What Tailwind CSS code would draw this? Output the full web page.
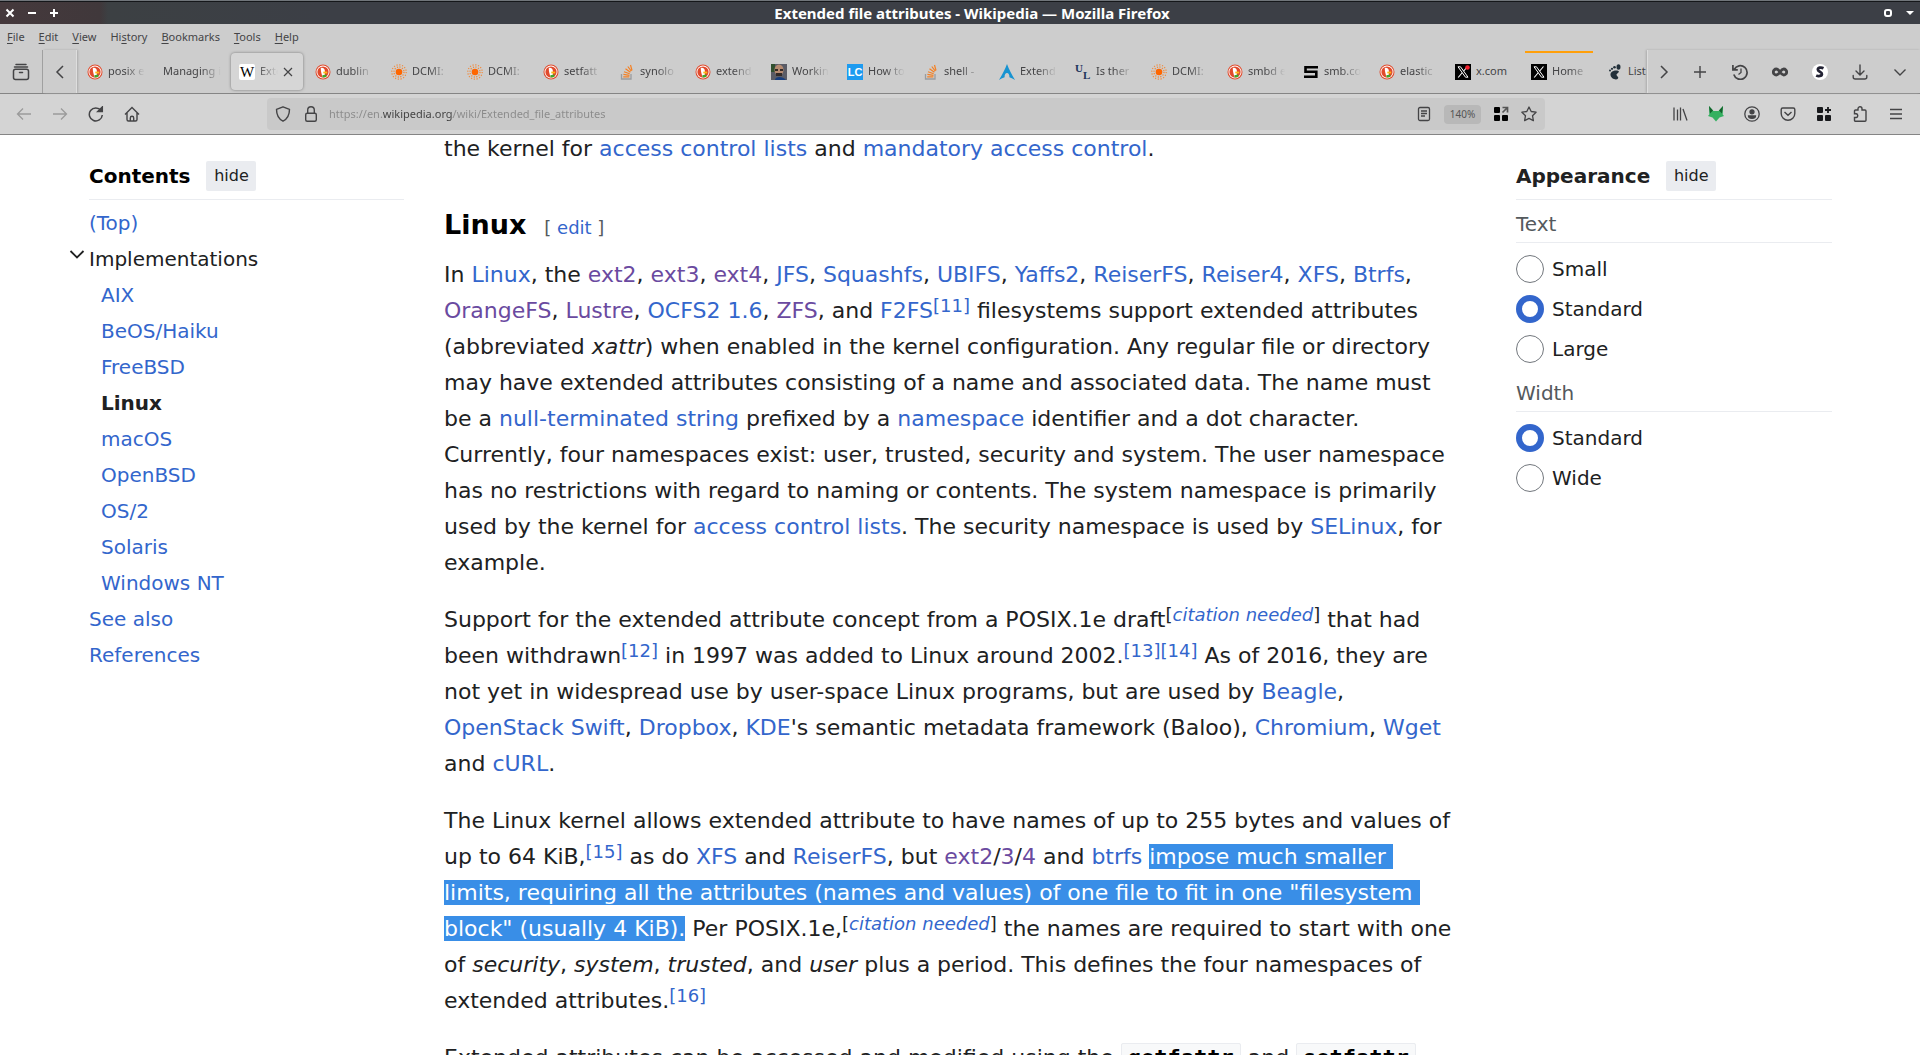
<!DOCTYPE html>
<html lang="en">
<head>
<meta charset="utf-8">
<title>Extended file attributes - Wikipedia — Mozilla Firefox</title>
<script src="https://cdn.jsdelivr.net/npm/@tailwindcss/browser@4"></script>
</head>
<body class="h-screen overflow-hidden flex flex-col bg-white text-[#202122] font-['DejaVu_Sans',sans-serif] [&_main_a]:text-[#3366cc] [&_main_a.v]:text-[#6a4aa0] [&_nav_a]:text-[#3366cc]">

<svg class="hidden" aria-hidden="true">
  <symbol id="ddg" viewBox="0 0 16 16"><circle cx="8" cy="8" r="7.500" fill="#e04a2c"/><circle cx="8" cy="8" r="6.500" fill="#fff"/><circle cx="8" cy="8" r="5.600" fill="#e04a2c"/><path d="M5.800 4C8 3.400 10 4.700 9.900 7.500l-.2 4.800-2.500.4C7 10.500 5.500 7 5.800 4z" fill="#fff"/><path d="M8.300 7.600h3.900v1.800H8.300z" fill="#fdb913"/><path d="M7.300 11.200l4-.6v2.400l-3.700.6z" fill="#3ca82b"/></symbol>
  <symbol id="dcmi" viewBox="0 0 16 16"><circle cx="8" cy="8" r="3.300" fill="#f60"/><circle cx="8" cy="8" r="5" fill="none" stroke="#f08a3c" stroke-width="1.300" stroke-dasharray="1.200 1.400"/><circle cx="8" cy="8" r="7.200" fill="none" stroke="#f08a3c" stroke-width="1.200" stroke-dasharray="1.200 1.630"/></symbol>
  <symbol id="so" viewBox="0 0 16 16"><path d="M2.500 10v5h9.500v-5" fill="none" stroke="#9a9c9f" stroke-width="1.300"/><path d="M4.200 12.800h6.200M4.400 10.400l6.100.9M5 7.700l5.700 2M6.500 4.800l4.900 3.500M8.800 2.500l3.500 4.700M11.500 1l1.500 5.500" stroke="#f48024" stroke-width="1.200" fill="none"/></symbol>
  <symbol id="x" viewBox="0 0 16 16"><path fill="#000" d="M0 0h16v16H0z"/><path d="M12.500 2.500L3.200 13.500" stroke="#fff" stroke-width="1.100"/><path d="M3 2.800h2.500l7.500 10.400h-2.500z" fill="#000" stroke="#fff" stroke-width="1"/></symbol>
</svg>

<header class="shrink-0 font-['Noto_Sans',sans-serif] text-[#444446] text-[11px]">
  <div class="h-6 bg-[linear-gradient(to_right,#45393c_0,#40383b_100px,#3c4043_108px,#3c3f46_320px)] border-t border-[#70757a] flex items-center justify-between text-white shadow-[inset_0_1px_0_#15171a]">
    <div class="flex-1 flex items-center gap-3 pl-[5px]">
      <button aria-label="Close" class="size-[10px]"><svg viewBox="0 0 10 10" stroke="currentColor" stroke-width="2"><path d="M1.500 1.500l7 7m0-7l-7 7"/></svg></button>
      <button aria-label="Minimise" class="size-[10px]"><svg viewBox="0 0 10 10" stroke="currentColor" stroke-width="2"><path d="M1 5h8"/></svg></button>
      <button aria-label="Maximise" class="size-[10px]"><svg viewBox="0 0 10 10" stroke="currentColor" stroke-width="2"><path d="M1 5h8M5 1v8"/></svg></button>
    </div>
    <h1 class="text-[15px] font-bold leading-6 pt-px ml-6">Extended file attributes - Wikipedia — Mozilla Firefox</h1>
    <div class="flex-1 flex items-center justify-end gap-3 pr-[5px]">
      <button aria-label="Shade" class="size-[10px]"><svg viewBox="0 0 10 10" fill="none" stroke="currentColor" stroke-width="2"><rect x="2" y="2" width="6" height="6" rx="2"/></svg></button>
      <button aria-label="Window menu" class="size-[10px]"><svg viewBox="0 0 10 10" fill="currentColor"><path d="M1 3h8L5 7z"/></svg></button>
    </div>
  </div>

  <div class="h-[26px] bg-[#cdcdcd] flex items-center gap-[14px] px-[7px] [&_u]:underline-offset-2">
    <button><u>F</u>ile</button><button><u>E</u>dit</button><button><u>V</u>iew</button><button>Hi<u>s</u>tory</button><button><u>B</u>ookmarks</button><button><u>T</u>ools</button><button><u>H</u>elp</button>
  </div>

  <div class="h-[44px] bg-[#cdcdcd] border-b border-[#858585] flex">
    <button aria-label="Recent tabs" class="w-[43px] shrink-0 border-r border-[#a0a0a0] flex items-center justify-center"><svg class="size-[18px]" viewBox="0 0 18 18" fill="none" stroke="currentColor" stroke-width="1.500" stroke-linecap="round"><path d="M4 1.500h10M2.500 4h13"/><rect x="1.500" y="6.200" width="15" height="10.300" rx="2"/><path d="M7.500 9.500h3"/></svg></button>
    <button aria-label="Scroll left" class="w-[34px] shrink-0 border-r border-[#dedede] shadow-[1px_0_2px_#aaa] flex items-center justify-center"><svg class="size-4" viewBox="0 0 16 16" fill="none" stroke="currentColor" stroke-width="1.500"><path d="M11 2L5 8l6 6"/></svg></button>
    <div id="tabs" role="tablist" class="flex-1 min-w-0 flex overflow-hidden"></div>
    <div class="shrink-0 border-l border-[#dedede] shadow-[-1px_0_2px_#aaa] flex items-center [&_button]:w-10 [&_button]:flex [&_button]:justify-center [&_svg]:size-4 [&_button:first-child]:w-8">
      <button aria-label="Scroll right"><svg viewBox="0 0 16 16" fill="none" stroke="currentColor" stroke-width="1.500"><path d="M5 2l6 6-6 6"/></svg></button>
      <button aria-label="New tab"><svg viewBox="0 0 16 16" stroke="currentColor" stroke-width="1.400"><path d="M2 8h12M8 2v12"/></svg></button>
      <button aria-label="History"><svg viewBox="0 0 16 16" fill="none" stroke="currentColor" stroke-width="1.700"><path d="M2.200 5.500A6.800 6.800 0 1 1 1.800 10.500M.9 1v4.900h4.900"/><path d="M9 4.500v4L6.500 10.500" stroke-width="1.300"/></svg></button>
      <button aria-label="Infinity"><svg viewBox="0 0 16 16" fill="none" stroke="currentColor" stroke-width="2.800"><path d="M8 8C6.500 5.800 5.700 5 4.300 5a3 3 0 0 0 0 6C5.700 11 6.500 10.200 8 8s2.300-3 3.700-3a3 3 0 0 1 0 6C10.300 11 9.500 10.200 8 8z"/></svg></button>
      <button aria-label="Stylus"><svg viewBox="0 0 16 16"><circle cx="8" cy="8" r="8" fill="#fff"/><path d="M11.500 4.200C9 3 5.800 3.500 5.900 5.800c.1 2 4.200 2 4 4.200-.2 2.300-3.500 2.500-5.700 1.400" fill="none" stroke="#223" stroke-width="2.800"/></svg></button>
      <button aria-label="Downloads"><svg viewBox="0 0 16 16" fill="none" stroke="currentColor" stroke-width="1.400" stroke-linecap="round"><path d="M8 1v9.500M4 7l4 4 4-4M1.200 11.500v1.500a2 2 0 0 0 2 2h9.600a2 2 0 0 0 2-2v-1.500"/></svg></button>
      <button aria-label="List all tabs"><svg viewBox="0 0 16 16" fill="none" stroke="currentColor" stroke-width="1.400"><path d="M2.500 5.500L8 11l5.500-5.500"/></svg></button>
    </div>
  </div>

  <div class="h-[41px] bg-[#d4d4d4] border-b border-[#858585] flex items-center">
    <div class="w-[267px] shrink-0 flex items-center gap-5 pl-4 [&_svg]:size-4">
      <button aria-label="Back" class="text-[#9b9b9b]"><svg viewBox="0 0 16 16" fill="none" stroke="currentColor" stroke-width="1.300"><path d="M15 8H1.500M7 2.500L1.500 8 7 13.500"/></svg></button>
      <button aria-label="Forward" class="text-[#9b9b9b]"><svg viewBox="0 0 16 16" fill="none" stroke="currentColor" stroke-width="1.300"><path d="M1 8h13.500M9 2.500L14.500 8 9 13.500"/></svg></button>
      <button aria-label="Reload"><svg viewBox="0 0 16 16" fill="none" stroke="currentColor" stroke-width="1.500"><path d="M13 4.500A6.500 6.500 0 1 0 14.300 9"/><path d="M14.300 1v4.500H9.800z" fill="currentColor"/></svg></button>
      <button aria-label="Home"><svg viewBox="0 0 16 16" fill="none" stroke="currentColor" stroke-width="1.400"><path d="M1 8.500L8 1.500l7 7M3 7v6.500a1.500 1.500 0 0 0 1.500 1.500h7a1.500 1.500 0 0 0 1.500-1.500V7M6.300 15v-3a1.700 1.700 0 0 1 3.400 0v3"/></svg></button>
    </div>
    <div class="flex-1 h-8 rounded bg-[#c9c9c9] flex items-center pl-2 pr-2 [&_svg]:size-4">
      <button aria-label="Tracking protection"><svg viewBox="0 0 16 16" fill="none" stroke="currentColor" stroke-width="1.400"><path d="M8 .8l6.500 2.500C14.500 9 13 12.700 8 15.200 3 12.700 1.500 9 1.500 3.300z" stroke-linejoin="round"/></svg></button>
      <button aria-label="Connection secure" class="ml-3"><svg viewBox="0 0 16 16" fill="none" stroke="currentColor" stroke-width="1.400"><rect x="2.700" y="7.200" width="10.600" height="8" rx="1.500"/><path d="M4.700 7V4a3.300 3.300 0 0 1 6.600 0v3"/></svg></button>
      <input aria-label="Address" value="https://en.wikipedia.org/wiki/Extended_file_attributes" class="flex-1 min-w-0 ml-[10px] leading-8 outline-none text-transparent bg-clip-text bg-[linear-gradient(to_right,#8a8a8a_54px,#3f3f3f_54px,#3f3f3f_124px,#8a8a8a_124px)]">
      <button aria-label="Reader view" class="mr-3"><svg viewBox="0 0 16 16" fill="none" stroke="currentColor" stroke-width="1.300"><rect x="2.500" y="1.500" width="11" height="13" rx="1.500"/><path d="M5 5h6M5 7.500h6M5 10h4"/></svg></button>
      <button class="h-[19px] w-[37px] rounded-sm bg-[#b8b8b8] text-[10px] text-[#555]">140%</button>
      <button aria-label="Open in container" class="ml-3 text-black"><svg viewBox="0 0 16 16" fill="currentColor"><rect x="1" y="1" width="6" height="6" rx="1"/><rect x="1" y="9" width="6" height="6" rx="1"/><rect x="9" y="9" width="6" height="6" rx="1"/><path d="M9.500 1.500h5v5M14.500 1.500L9.500 6.500" fill="none" stroke="#555" stroke-width="1.700"/></svg></button>
      <button aria-label="Bookmark" class="ml-3"><svg viewBox="0 0 16 16" fill="none" stroke="currentColor" stroke-width="1.300" stroke-linejoin="round"><path d="M8 1l2.200 4.500 4.900.7-3.600 3.500.9 4.900L8 12.300l-4.400 2.300.9-4.900L.9 6.200l4.900-.7z"/></svg></button>
    </div>
    <div class="w-[375px] shrink-0 flex items-center justify-end gap-5 pr-4 [&_svg]:size-4">
      <button aria-label="Library"><svg viewBox="0 0 16 16" fill="none" stroke="currentColor" stroke-width="1.300"><path d="M2 1.500v13M5.500 3.500v11M8.500 1.500v13M11 3l4 11.500"/></svg></button>
      <button aria-label="Fox"><svg viewBox="0 0 16 16"><path d="M1 0l4.500 5h5L15 0l-.3 8.500L16 10l-4.500 1.500L8 15.500l-3.500-4L0 10l1.300-1.500z" fill="#34b060"/><path d="M1 0l4 4.500L2 7.500zM15 0l-4 4.500 3 3z" fill="#14622c"/></svg></button>
      <button aria-label="Account"><svg viewBox="0 0 16 16" fill="none" stroke="currentColor" stroke-width="1.300"><circle cx="8" cy="8" r="7.200"/><circle cx="8" cy="5.800" r="2" fill="currentColor"/><path d="M4.500 10h7c0 1.700-1.500 2.300-3.500 2.300S4.500 11.700 4.500 10z" fill="currentColor"/></svg></button>
      <button aria-label="Pocket"><svg viewBox="0 0 16 16" fill="none" stroke="currentColor" stroke-width="1.400"><path d="M2.700 2h10.600a1.500 1.500 0 0 1 1.500 1.500v4a6.800 6.800 0 0 1-13.600 0v-4A1.500 1.500 0 0 1 2.700 2zM4.500 6L8 9.300 11.500 6"/></svg></button>
      <button aria-label="Add" class="text-[#18191c]"><svg viewBox="0 0 16 16" fill="currentColor"><rect x="1" y="1" width="6" height="6" rx="1"/><rect x="1" y="9" width="6" height="6" rx="1"/><rect x="9" y="9" width="6" height="6" rx="1"/><path d="M12 1v6M9 4h6" stroke="currentColor" stroke-width="1.800"/></svg></button>
      <button aria-label="Extensions"><svg viewBox="0 0 16 16" fill="none" stroke="currentColor" stroke-width="1.400"><path d="M6 4V2.800a2 2 0 0 1 4 0V4h3a1 1 0 0 1 1 1v9.300a1 1 0 0 1-1 1H3.500a1 1 0 0 1-1-1V11.500H4.300a1.900 1.900 0 0 0 0-3.700H2.500V5a1 1 0 0 1 1-1z"/></svg></button>
      <button aria-label="Menu"><svg viewBox="0 0 16 16" stroke="currentColor" stroke-width="1.400"><path d="M2 3.500h12M2 8h12M2 12.500h12"/></svg></button>
    </div>
  </div>
</header>

<div class="flex-1 min-h-0 overflow-hidden flex justify-between pl-[89px] pr-[88px]">
  <nav aria-label="Contents" class="w-[315px] shrink-0 pt-[25px] text-xl leading-9">
    <div class="flex items-center gap-4 h-10 pb-[7px] border-b border-[#eaecf0]">
      <h2 class="font-bold text-black">Contents</h2>
      <button class="h-[30px] w-[50px] rounded-xs bg-[#eaecf0] text-base">hide</button>
    </div>
    <ul class="pt-[5px]">
      <li><a href="#">(Top)</a></li>
      <li class="relative"><button aria-label="Toggle Implementations" class="absolute -left-5 top-2"><svg class="w-4 h-3" viewBox="0 0 16 12" fill="none" stroke="#202122" stroke-width="1.800"><path d="M1.500 2L8 8.500 14.500 2"/></svg></button>Implementations
        <ul class="pl-3">
          <li><a href="#">AIX</a></li><li><a href="#">BeOS/Haiku</a></li><li><a href="#">FreeBSD</a></li><li class="font-bold">Linux</li><li><a href="#">macOS</a></li><li><a href="#">OpenBSD</a></li><li><a href="#">OS/2</a></li><li><a href="#">Solaris</a></li><li><a href="#">Windows NT</a></li>
        </ul></li>
      <li><a href="#">See also</a></li>
      <li><a href="#">References</a></li>
    </ul>
  </nav>

  <main class="w-[1032px] shrink-0 pr-[14px] text-[22px] leading-9 [&_sup]:text-lg [&_sup]:leading-none [&_sup]:top-[-6px] [&_mark]:bg-[#398ee7] [&_mark]:text-white">
    <p class="-mt-1">the kernel for <a href="#">access control lists</a> and <a href="#">mandatory access control</a>.</p>
    <div class="flex items-baseline gap-[18px] mt-[38px] mb-3">
      <h3 class="text-[27px] leading-10 font-bold text-black">Linux</h3>
      <span class="text-lg text-[#54595d]">[ <a href="#">edit</a> ]</span>
    </div>
    <p class="mb-[21px]">In <a href="#">Linux</a>, the <a href="#" class="v">ext2</a>, <a href="#" class="v">ext3</a>, <a href="#" class="v">ext4</a>, <a href="#">JFS</a>, <a href="#">Squashfs</a>, <a href="#">UBIFS</a>, <a href="#">Yaffs2</a>, <a href="#">ReiserFS</a>, <a href="#">Reiser4</a>, <a href="#">XFS</a>, <a href="#">Btrfs</a>, <a href="#" class="v">OrangeFS</a>, <a href="#" class="v">Lustre</a>, <a href="#">OCFS2 1.6</a>, <a href="#" class="v">ZFS</a>, and <a href="#">F2FS</a><sup><a href="#">[11]</a></sup> filesystems support extended attributes (abbreviated <i>xattr</i>) when enabled in the kernel configuration. Any regular file or directory may have extended attributes consisting of a name and associated data. The name must be a <a href="#">null-terminated string</a> prefixed by a <a href="#">namespace</a> identifier and a dot character. Currently, four namespaces exist: user, trusted, security and system. The user namespace has no restrictions with regard to naming or contents. The system namespace is primarily used by the kernel for <a href="#">access control lists</a>. The security namespace is used by <a href="#">SELinux</a>, for example.</p>
    <p class="mb-[21px]">Support for the extended attribute concept from a POSIX.1e draft<sup>[<i><a href="#">citation needed</a></i>]</sup> that had been withdrawn<sup><a href="#">[12]</a></sup> in 1997 was added to Linux around 2002.<sup><a href="#">[13]</a><a href="#">[14]</a></sup> As of 2016, they are not yet in widespread use by user-space Linux programs, but are used by <a href="#">Beagle</a>, <a href="#">OpenStack Swift</a>, <a href="#">Dropbox</a>, <a href="#">KDE</a>'s semantic metadata framework (Baloo), <a href="#">Chromium</a>, <a href="#">Wget</a> and <a href="#">cURL</a>.</p>
    <p class="mb-[21px]">The Linux kernel allows extended attribute to have names of up to 255 bytes and values of up to 64 KiB,<sup><a href="#">[15]</a></sup> as do <a href="#">XFS</a> and <a href="#">ReiserFS</a>, but <a href="#" class="v">ext2</a>/<a href="#" class="v">3</a>/<a href="#" class="v">4</a> and <a href="#">btrfs</a> <mark class="pr-[7px]">impose much smaller</mark> <mark class="pr-[7px]">limits, requiring all the attributes (names and values) of one file to fit in one "filesystem</mark> <mark>block" (usually 4 KiB).</mark> Per POSIX.1e,<sup>[<i><a href="#">citation needed</a></i>]</sup> the names are required to start with one of <i>security</i>, <i>system</i>, <i>trusted</i>, and <i>user</i> plus a period. This defines the four namespaces of extended attributes.<sup><a href="#">[16]</a></sup></p>
    <p>Extended attributes can be accessed and modified using the <code class="px-[6px] py-px border border-[#eaecf0] rounded-xs bg-[#f8f9fa] text-black font-bold font-['DejaVu_Sans_Mono',monospace] text-[22px]">getfattr</code> and <code class="px-[6px] py-px border border-[#eaecf0] rounded-xs bg-[#f8f9fa] text-black font-bold font-['DejaVu_Sans_Mono',monospace] text-[22px]">setfattr</code></p>
  </main>

  <aside aria-label="Appearance" class="w-[316px] shrink-0 pt-[25px] text-xl [&_label]:h-10 [&_label]:flex [&_label]:items-center [&_label]:gap-2 [&_input]:appearance-none [&_input]:size-7 [&_input]:rounded-full [&_input]:border [&_input]:border-[#72777d] [&_input:checked]:border-6 [&_input:checked]:border-[#3366cc]">
    <div class="flex items-center gap-4 h-10 pb-[7px] border-b border-[#eaecf0]">
      <h2 class="font-bold">Appearance</h2>
      <button class="h-[30px] w-[50px] rounded-xs bg-[#eaecf0] text-base">hide</button>
    </div>
    <fieldset>
      <legend class="w-full h-[43px] leading-[48px] text-[#54595d] border-b border-[#eaecf0] mb-[6px]">Text</legend>
      <label><input type="radio" name="text">Small</label>
      <label><input type="radio" name="text" checked>Standard</label>
      <label><input type="radio" name="text">Large</label>
    </fieldset>
    <fieldset>
      <legend class="w-full h-[43px] leading-[48px] text-[#54595d] border-b border-[#eaecf0] mb-[6px]">Width</legend>
      <label><input type="radio" name="width" checked>Standard</label>
      <label><input type="radio" name="width">Wide</label>
    </fieldset>
  </aside>
</div>

<script>
  const use = id => `<svg class="size-4" viewBox="0 0 16 16"><use href="#${id}"/></svg>`;
  const wiki = `<span class="size-4 rounded-xs bg-white text-black text-[15px] leading-4 flex justify-center font-['Liberation_Serif',serif]">W</span>`;
  const face = '<svg class="size-4" viewBox="0 0 16 16"><path fill="#5a5c66" d="M0 0h16v16H0z"/><path fill="#31502f" d="M0 0h4v8H0z"/><ellipse cx="8" cy="6" rx="4.500" ry="5.500" fill="#b58a70"/><path fill="#332a28" d="M4 5h3v2H4zM9 5h3v2H9zM5 9h6v3H5z"/><path fill="#173d7c" d="M4 16c0-4 8-4 11 0z"/></svg>';
  const lc = `<span class="size-4 bg-[#1d9bf0] text-white text-[11px] leading-4 font-bold flex justify-center font-['Liberation_Sans',sans-serif]">LC</span>`;
  const arch = '<svg class="size-4" viewBox="0 0 16 16"><path fill="#1793d1" d="M8 0c2 5.500 4.500 10 8 16-2.500-1.500-4-2.300-5.600-2.700.2-2.500-.9-4.300-2.400-4.300s-2.600 1.800-2.400 4.300C4 13.700 2.500 14.500 0 16 3.500 10 6 5.500 8 0z"/></svg>';
  const ul = `<span class="size-4 relative text-[#21365c] font-bold text-[11px] leading-none font-['Liberation_Serif',serif]"><span class="absolute -top-px left-0">U</span><span class="absolute top-[6px] left-2">L</span></span>`;
  const smb = '<svg class="size-4" viewBox="0 0 16 16"><path fill="none" stroke="#000" stroke-width="2.600" d="M15 3.300H2.500v4.500h10.800v5H1"/></svg>';
  const foot = '<svg class="size-4" viewBox="0 0 16 16" fill="#22303a"><ellipse cx="11.500" cy="3" rx="2" ry="2.800"/><circle cx="7.500" cy="3.200" r="1.300"/><circle cx="5" cy="4.800" r="1.100"/><circle cx="3" cy="6.500" r="1"/><path d="M11.500 7C8 5.500 3 7.500 3.500 11c.4 4 6 5.500 7.500 3.500 1-1.500-1-2-1.500-3.500s3.500-2.500 2-4z"/></svg>';
  const xdot = '<svg class="size-4" viewBox="0 0 16 16"><use href="#x"/><circle cx="12.500" cy="3.500" r="2.300" fill="#f4212e"/></svg>';
  const tabs = [[use('ddg'),'posix e'],['','Managing i'],[wiki,'Exte'],[use('ddg'),'dublin'],[use('dcmi'),'DCMI:'],[use('dcmi'),'DCMI:'],[use('ddg'),'setfatt'],[use('so'),'synolo'],[use('ddg'),'extend'],[face,'Workin'],[lc,'How to'],[use('so'),'shell -'],[arch,'Extend'],[ul,'Is ther'],[use('dcmi'),'DCMI:'],[use('ddg'),'smbd e'],[smb,'smb.co'],[use('ddg'),'elastic'],[xdot,'x.com'],[use('x'),'Home'],[foot,'List']];
  document.getElementById('tabs').innerHTML = tabs.map(([icon, label], i) => {
    const active = i === 2;
    const fade = label === 'x.com' || label === 'List' ? '' : '[mask-image:linear-gradient(to_right,#000_calc(100%-20px),transparent)]';
    return `<div class="w-[76px] shrink-0 px-[2px] py-[3px] relative">${i === 19 ? '<span class="absolute top-px left-1 right-1 h-[2px] bg-[#ff9f0a]"></span>' : ''}
      <button role="tab" aria-selected="${active}" class="w-full h-[37px] rounded pl-2 pr-[6px] flex items-center gap-[5px] ${active ? 'bg-[#d6d6d6] shadow-[0_0_3px_#777]' : ''}">${icon ? `<span class="shrink-0 flex">${icon}</span>` : ''}<span class="flex-1 min-w-0 overflow-hidden whitespace-nowrap text-left ${fade}">${label}</span>${active ? '<svg class="size-[10px] shrink-0 mr-1" viewBox="0 0 10 10" stroke="currentColor" stroke-width="1.200"><path d="M1 1l8 8m0-8L1 9"/></svg>' : ''}</button></div>`;
  }).join('');
</script>
</body>
</html>
